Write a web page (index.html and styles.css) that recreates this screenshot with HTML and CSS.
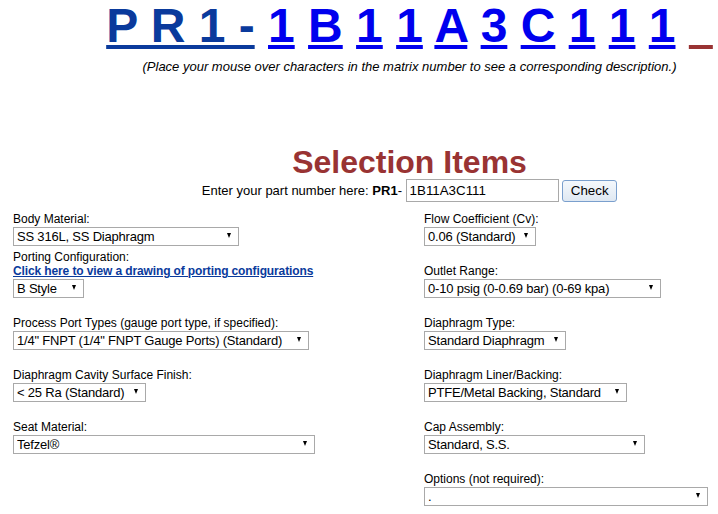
FILE: index.html
```html
<!DOCTYPE html>
<html lang="en">
<head>
  <meta charset="UTF-8">
  <meta name="viewport" content="width=device-width, initial-scale=1.0">
  <title>PR1 Part Number Configurator</title>
  <link rel="stylesheet" href="styles.css">
</head>
<body>
  <div class="page">
    <h1 class="matrix">
      <a class="prefix" href="#">P R 1 -</a>
      <a class="code" href="#" title="Body Material">1</a>
      <a class="code" href="#" title="Porting Configuration">B</a>
      <a class="code" href="#" title="Process Port Types">1</a>
      <a class="code" href="#" title="Diaphragm Cavity Surface Finish">1</a>
      <a class="code" href="#" title="Seat Material">A</a>
      <a class="code" href="#" title="Flow Coefficient">3</a>
      <a class="code" href="#" title="Outlet Range">C</a>
      <a class="code" href="#" title="Diaphragm Type">1</a>
      <a class="code" href="#" title="Diaphragm Liner/Backing">1</a>
      <a class="code" href="#" title="Cap Assembly">1</a>
      <a class="blank" href="#" title="Options">&ensp;</a>
    </h1>
    <p class="hint">(Place your mouse over characters in the matrix number to see a corresponding description.)</p>

    <h2 class="section-title">Selection Items</h2>
    <form class="part-form">
      Enter your part number here: <b>PR1</b>- <input type="text" id="part-number" value="1B11A3C111"> <button type="button" id="check-btn">Check</button>
    </form>

    <div class="fields">
      <div class="field">
        <label for="body-material">Body Material:</label>
        <span class="select"><select id="body-material"><option>SS 316L, SS Diaphragm</option></select></span>
      </div>
      <div class="field">
        <label for="flow">Flow Coefficient (Cv):</label>
        <span class="select"><select id="flow"><option>0.06 (Standard)</option></select></span>
      </div>

      <div class="field field-tall">
        <label for="porting">Porting Configuration:</label>
        <a class="drawing-link" href="#">Click here to view a drawing of porting configurations</a>
        <span class="select"><select id="porting"><option>B Style</option></select></span>
      </div>
      <div class="field">
        <label for="outlet">Outlet Range:</label>
        <span class="select"><select id="outlet"><option>0-10 psig (0-0.69 bar) (0-69 kpa)</option></select></span>
      </div>

      <div class="field">
        <label for="process-ports">Process Port Types (gauge port type, if specified):</label>
        <span class="select"><select id="process-ports"><option>1/4" FNPT (1/4" FNPT Gauge Ports) (Standard)</option></select></span>
      </div>
      <div class="field">
        <label for="diaphragm-type">Diaphragm Type:</label>
        <span class="select"><select id="diaphragm-type"><option>Standard Diaphragm</option></select></span>
      </div>

      <div class="field">
        <label for="cavity-finish">Diaphragm Cavity Surface Finish:</label>
        <span class="select"><select id="cavity-finish"><option>&lt; 25 Ra (Standard)</option></select></span>
      </div>
      <div class="field">
        <label for="liner">Diaphragm Liner/Backing:</label>
        <span class="select"><select id="liner"><option>PTFE/Metal Backing, Standard</option></select></span>
      </div>

      <div class="field">
        <label for="seat-material">Seat Material:</label>
        <span class="select"><select id="seat-material"><option>Tefzel®</option></select></span>
      </div>
      <div class="field">
        <label for="cap">Cap Assembly:</label>
        <span class="select"><select id="cap"><option>Standard, S.S.</option></select></span>
      </div>

      <div class="field field-right">
        <label for="options">Options (not required):</label>
        <span class="select"><select id="options"><option>.</option></select></span>
      </div>
    </div>
  </div>
</body>
</html>
```

FILE: styles.css
```css
body {
  margin: 0;
  font-family: Arial, "Liberation Sans", sans-serif;
  color: #000;
  background-color: #fff;
  overflow: hidden;
}

.page {
  width: 803px;
  margin-left: 8px;
}

.matrix {
  margin: 0;
  font-size: 48px;
  line-height: 52px;
  font-weight: bold;
  text-align: center;
}

.matrix a {
  text-decoration: underline;
}

.matrix .prefix {
  color: #0a3a9c;
}

.matrix .code {
  color: #0000ee;
}

.matrix .blank {
  color: #993333;
}

.hint {
  margin: 7px 0 0;
  font-size: 13px;
  line-height: 15px;
  font-style: italic;
  text-align: center;
}

.section-title {
  margin: 71px 0 0;
  font-size: 32px;
  line-height: 34px;
  font-weight: bold;
  color: #993333;
  text-align: center;
}

.part-form {
  margin: 0;
  font-size: 13px;
  text-align: center;
}

#part-number {
  box-sizing: border-box;
  width: 153px;
  height: 23px;
  padding: 0 3px;
  border: 1px solid #a9a9a9;
  font: 13.33px Arial, "Liberation Sans", sans-serif;
  color: #000;
}

#check-btn {
  box-sizing: border-box;
  width: 55px;
  height: 22px;
  padding: 0;
  border: 1px solid #7a9fcd;
  border-radius: 3px;
  background: linear-gradient(#f4f8fc, #dfe8f2);
  font: 13.33px Arial, "Liberation Sans", sans-serif;
  color: #000;
}

.fields {
  display: grid;
  grid-template-columns: 411px 1fr;
  row-gap: 18px;
  align-items: end;
  margin-top: 10px;
  padding-left: 5px;
}

.field {
  display: flex;
  flex-direction: column;
  align-items: flex-start;
}

.field-tall {
  margin-top: -14px;
}

.field-right {
  grid-column: 2;
}

.field label {
  display: block;
  font-size: 12px;
  line-height: 14px;
}

.drawing-link {
  display: block;
  font-size: 12px;
  line-height: 14px;
  font-weight: bold;
  letter-spacing: -0.12px;
  color: #0a3a9c;
  text-decoration: underline;
}

.select {
  position: relative;
  display: block;
  margin-top: 1px;
}

.select select {
  display: block;
  box-sizing: border-box;
  height: 19px;
  padding: 0 14px 0 3px;
  border: 1px solid #a9a9a9;
  border-radius: 0;
  background: #fff;
  font: 13px Arial, "Liberation Sans", sans-serif;
  letter-spacing: -0.2px;
  color: #000;
  appearance: none;
  -webkit-appearance: none;
}

.select::after {
  content: "";
  position: absolute;
  top: 6px;
  right: 8px;
  border-left: 2.5px solid transparent;
  border-right: 2.5px solid transparent;
  border-top: 5px solid #000;
  pointer-events: none;
}

#body-material { width: 226px; }
#porting { width: 71px; }
#process-ports { width: 296px; }
#cavity-finish { width: 133px; }
#seat-material { width: 302px; }
#flow { width: 112px; }
#outlet { width: 237px; }
#diaphragm-type { width: 142px; }
#liner { width: 203px; }
#cap { width: 221px; }
#options { width: 284px; }
```
